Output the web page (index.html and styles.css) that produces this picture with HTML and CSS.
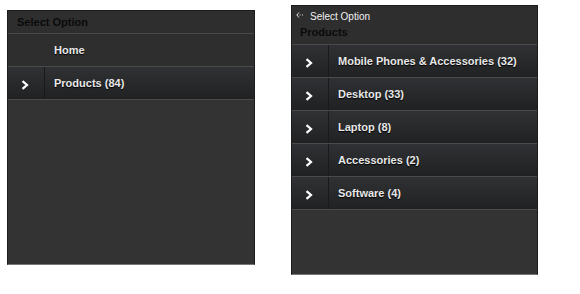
FILE: index.html
```html
<!DOCTYPE html>
<html lang="en">
<head>
    <meta charset="utf-8">
    <title>Select Option</title>
    <link rel="stylesheet" href="styles.css">
</head>
<body>
    <div class="panels">
        <!-- top level menu -->
        <div class="menu menu-root">
            <div class="menu-header">
                <span class="menu-title">Select Option</span>
            </div>
            <ul class="menu-list">
                <li class="menu-item plain">
                    <span class="item-icon"></span>
                    <span class="item-label">Home</span>
                </li>
                <li class="menu-item">
                    <span class="item-icon">
                        <svg viewBox="0 0 8 10" width="8" height="10"><path d="M1.5 1.2 L6 5 L1.5 8.8" fill="none" stroke="#fff" stroke-width="2.2"/></svg>
                    </span>
                    <span class="item-label">Products (84)</span>
                </li>
            </ul>
        </div>

        <!-- sub menu -->
        <div class="menu menu-sub">
            <div class="menu-header">
                <div class="back-link">
                    <svg class="back-icon" viewBox="0 0 8 6" width="8" height="6"><path d="M3 0.5 L0.8 3 L3 5.5 M1 3 H2 M3.5 3 H4.5 M6 3 H7" fill="none" stroke="#ddd" stroke-width="1"/></svg>
                    <span>Select Option</span>
                </div>
                <span class="menu-title">Products</span>
            </div>
            <ul class="menu-list">
                <li class="menu-item">
                    <span class="item-icon">
                        <svg viewBox="0 0 8 10" width="8" height="10"><path d="M1.5 1.2 L6 5 L1.5 8.8" fill="none" stroke="#fff" stroke-width="2.2"/></svg>
                    </span>
                    <span class="item-label">Mobile Phones &amp; Accessories (32)</span>
                </li>
                <li class="menu-item">
                    <span class="item-icon">
                        <svg viewBox="0 0 8 10" width="8" height="10"><path d="M1.5 1.2 L6 5 L1.5 8.8" fill="none" stroke="#fff" stroke-width="2.2"/></svg>
                    </span>
                    <span class="item-label">Desktop (33)</span>
                </li>
                <li class="menu-item">
                    <span class="item-icon">
                        <svg viewBox="0 0 8 10" width="8" height="10"><path d="M1.5 1.2 L6 5 L1.5 8.8" fill="none" stroke="#fff" stroke-width="2.2"/></svg>
                    </span>
                    <span class="item-label">Laptop (8)</span>
                </li>
                <li class="menu-item">
                    <span class="item-icon">
                        <svg viewBox="0 0 8 10" width="8" height="10"><path d="M1.5 1.2 L6 5 L1.5 8.8" fill="none" stroke="#fff" stroke-width="2.2"/></svg>
                    </span>
                    <span class="item-label">Accessories (2)</span>
                </li>
                <li class="menu-item">
                    <span class="item-icon">
                        <svg viewBox="0 0 8 10" width="8" height="10"><path d="M1.5 1.2 L6 5 L1.5 8.8" fill="none" stroke="#fff" stroke-width="2.2"/></svg>
                    </span>
                    <span class="item-label">Software (4)</span>
                </li>
            </ul>
        </div>
    </div>
</body>
</html>
```

FILE: styles.css
```css
* {
    margin: 0;
    padding: 0;
    box-sizing: border-box;
}

body {
    font-family: "Liberation Sans", Arial, sans-serif;
    background: #fff;
}

.panels {
    display: flex;
    align-items: flex-start;
    gap: 36px;
    padding-left: 7px;
}

.menu {
    width: 248px;
    background: #333;
    border: 1px solid #1c1c1c;
    border-bottom-color: #777;
}

.menu-root {
    margin-top: 10px;
    height: 255px;
}

.menu-sub {
    margin-top: 5px;
    width: 247px;
    height: 270px;
}

.menu-header {
    background: #2e2e2e;
    border-bottom: 1px solid #4a4a4a;
    padding-left: 9px;
    display: flex;
    flex-direction: column;
    justify-content: center;
}

.menu-root .menu-header {
    height: 23px;
}

.menu-sub .menu-header {
    height: 39px;
    padding-left: 8px;
    justify-content: flex-start;
    padding-top: 5px;
}

.menu-title {
    font-size: 11px;
    font-weight: bold;
    color: #0a0a0a;
}

.back-link {
    display: flex;
    align-items: flex-start;
    gap: 6px;
    font-size: 10px;
    color: #f2f2f2;
    height: 15px;
    margin-left: -4px;
}

.back-icon {
    margin-top: 1px;
}

.menu-list {
    list-style: none;
}

.menu-item {
    display: flex;
    height: 33px;
    border-bottom: 1px solid #4a4a4a;
    background: linear-gradient(#303134, #202122);
}

.menu-item.plain {
    background: #2e2e2e;
}

.item-icon {
    width: 37px;
    flex-shrink: 0;
    display: flex;
    align-items: center;
    justify-content: center;
    border-right: 1px solid #1a1a1a;
    padding-top: 3px;
    padding-right: 3px;
}

.menu-item.plain .item-icon {
    border-right-color: transparent;
}

.item-label {
    display: flex;
    align-items: center;
    padding-left: 9px;
    font-size: 11px;
    font-weight: bold;
    color: #e8e8e8;
    text-shadow: 0 1px 1px #000;
}
```
